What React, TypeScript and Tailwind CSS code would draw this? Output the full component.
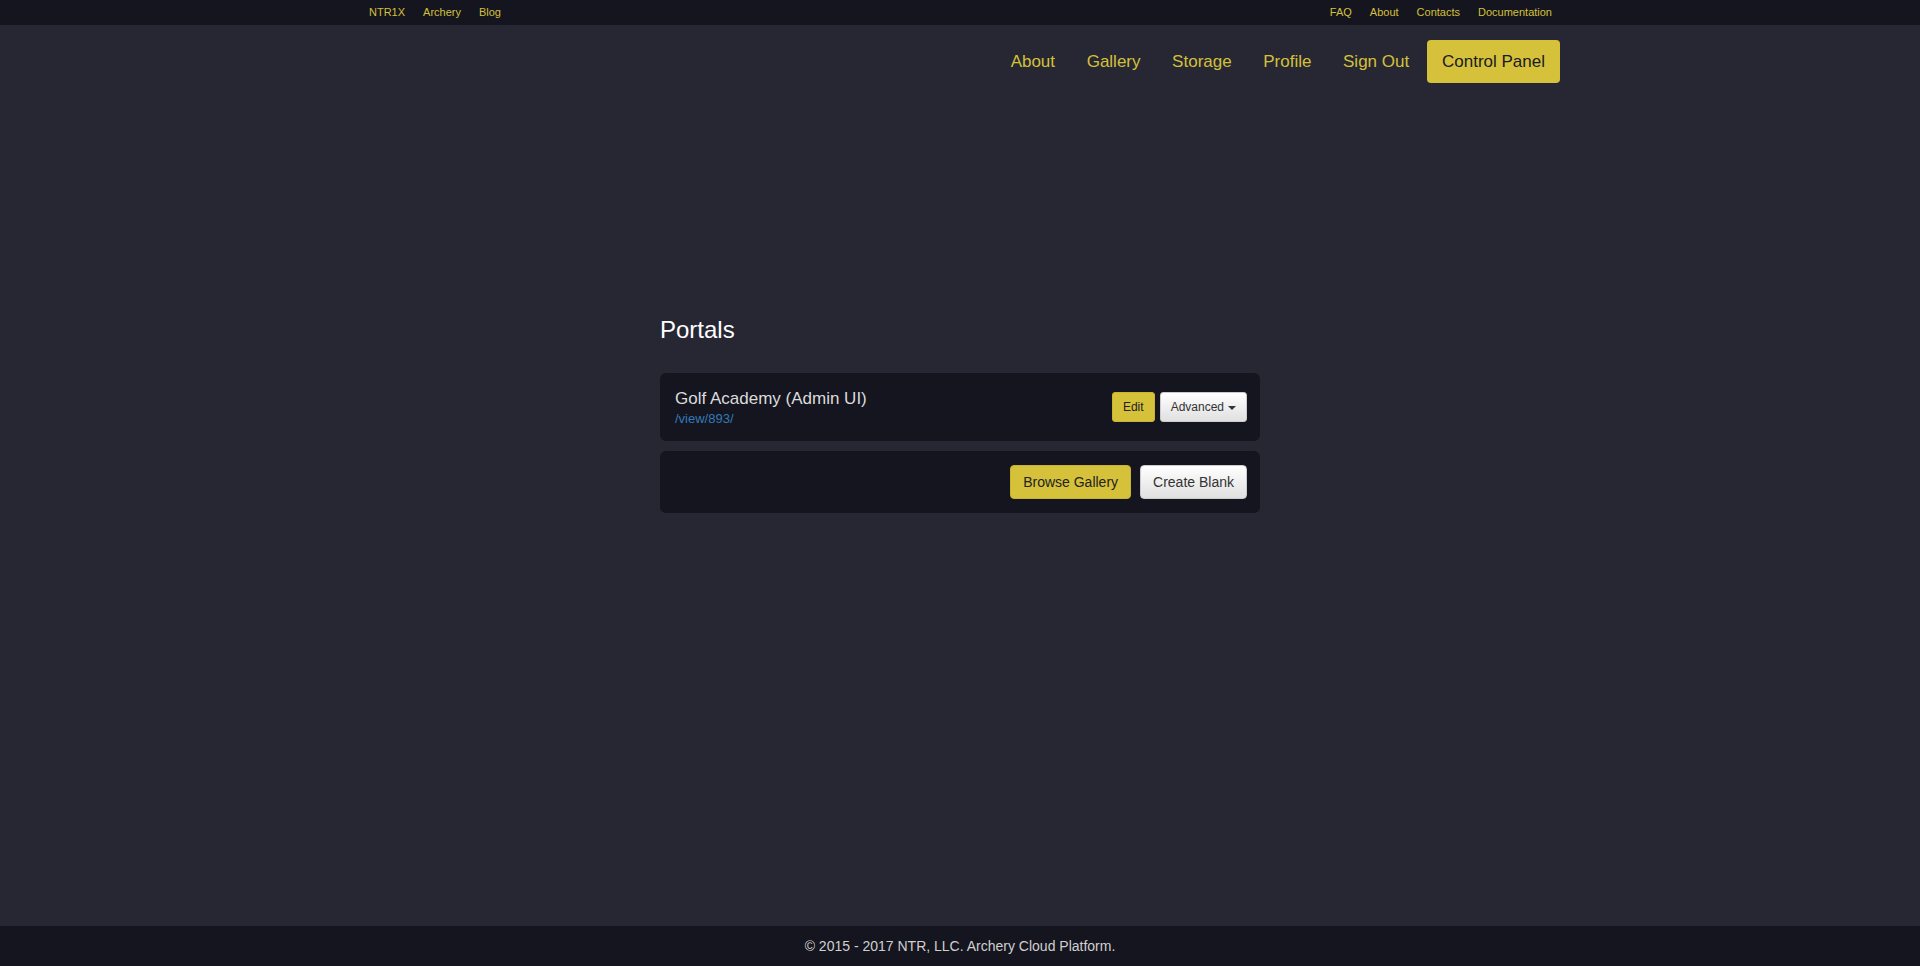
const font = { fontFamily: '"Liberation Sans", Arial, Helvetica, sans-serif' };

const topLeft = ["NTR1X", "Archery", "Blog"];
const topRight = ["FAQ", "About", "Contacts", "Documentation"];
const navLinks = ["About", "Gallery", "Storage", "Profile", "Sign Out"];

function TopBar() {
  return (
    <div className="h-[25px] bg-[#15151f]">
      <div className="mx-auto flex h-full w-[1200px] items-center justify-between text-[11px] leading-[25px] text-[#d4c03a]">
        <div className="flex">
          {topLeft.map((l) => (
            <a key={l} className="px-[9px]">
              {l}
            </a>
          ))}
        </div>
        <div className="flex pr-[-1px]">
          {topRight.map((l) => (
            <a key={l} className="px-[9px] last:pr-[8px]">
              {l}
            </a>
          ))}
        </div>
      </div>
    </div>
  );
}

function NavBar() {
  return (
    <div className="mx-auto flex w-[1200px] justify-end pt-[15px]">
      <nav className="flex items-center text-[17px]">
        {navLinks.map((l) => (
          <a key={l} className="px-[15.8px] leading-[43px] text-[#d4c03a]">
            {l}
          </a>
        ))}
        <a className="ml-[2px] flex h-[43px] items-center rounded-[4px] bg-[#d6c13a] px-[15px] text-[#1a1a22]">
          Control Panel
        </a>
      </nav>
    </div>
  );
}

function PortalCard() {
  return (
    <div className="flex items-center justify-between rounded-[6px] bg-[#15151f] pl-[15px] pr-[13px] py-[14px]">
      <div>
        <div className="text-[17px] leading-[24px] text-[#dcdcdc]">Golf Academy (Admin UI)</div>
        <a className="block text-[13px] leading-[16px] text-[#337ab7]">/view/893/</a>
      </div>
      <div className="flex items-center gap-[5px] text-[12px]">
        <button className="h-[30px] rounded-[3px] border border-[#c9b434] bg-[#d6c13a] px-[10px] text-[#222]">
          Edit
        </button>
        <button className="flex h-[30px] items-center rounded-[3px] border border-[#ccc] bg-gradient-to-b from-white to-[#e0e0e0] px-[10px] text-[#333]">
          Advanced
          <span className="ml-[4px] mt-[1px] inline-block h-0 w-0 border-x-4 border-t-4 border-x-transparent border-t-[#333]" />
        </button>
      </div>
    </div>
  );
}

function ActionsCard() {
  return (
    <div className="flex justify-end gap-[9px] rounded-[6px] bg-[#15151f] pl-[15px] pr-[13px] py-[14px] text-[14px]">
      <button className="h-[34px] rounded-[4px] border border-[#c9b434] bg-[#d6c13a] px-3 text-[#222]">
        Browse Gallery
      </button>
      <button className="h-[34px] rounded-[4px] border border-[#ccc] bg-gradient-to-b from-white to-[#e0e0e0] px-3 text-[#333]">
        Create Blank
      </button>
    </div>
  );
}

export default function App() {
  return (
    <div className="flex min-h-screen flex-col bg-[#262733]" style={font}>
      <TopBar />
      <NavBar />
      <main className="mx-auto w-[600px] pt-[234px]">
        <h3 className="text-[24px] leading-[26px] text-white">Portals</h3>
        <div className="mt-[30px] flex flex-col gap-[10px]">
          <PortalCard />
          <ActionsCard />
        </div>
      </main>
      <footer className="mt-auto flex h-[40px] items-center justify-center bg-[#15151f] text-[14px] text-[#d0d0d0]">
        © 2015 - 2017 NTR, LLC. Archery Cloud Platform.
      </footer>
    </div>
  );
}
